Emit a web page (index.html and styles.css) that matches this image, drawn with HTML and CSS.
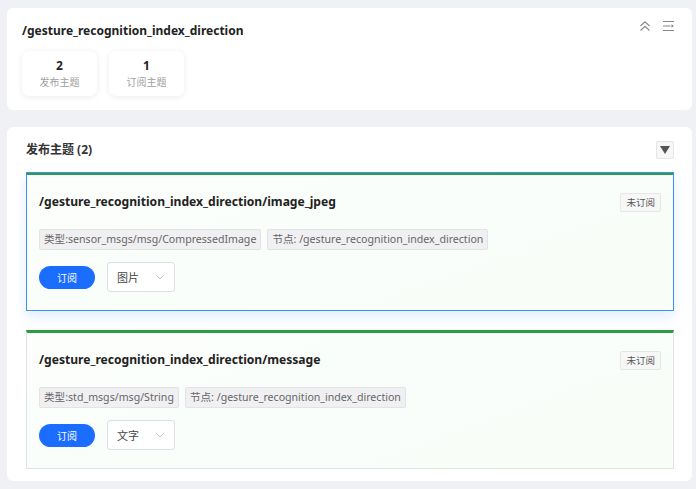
FILE: index.html
```html
<!DOCTYPE html>
<html lang="zh">
<head>
<meta charset="utf-8">
<link rel="stylesheet" href="styles.css">
</head>
<body>
<div class="page">
  <section class="card top">
    <div class="top-head">
      <h1 class="node-title">/gesture_recognition_index_direction</h1>
      <div class="tools">
        <svg class="ico" width="12" height="12" viewBox="0 0 12 12"><path d="M1.5 6 L6 1.8 L10.5 6 M1.5 10.5 L6 6.3 L10.5 10.5" fill="none" stroke="#888" stroke-width="1.1"/></svg>
        <svg class="ico" width="13" height="12" viewBox="0 0 13 12"><path d="M1 1.5 H12 M1 6 H8.5 M1 10.5 H12" stroke="#888" stroke-width="1.1" fill="none"/><path d="M9.5 4.3 L12 6 L9.5 7.7 Z" fill="#888"/></svg>
      </div>
    </div>
    <div class="stats">
      <div class="stat"><div class="num">2</div><div class="lbl">发布主题</div></div>
      <div class="stat"><div class="num">1</div><div class="lbl">订阅主题</div></div>
    </div>
  </section>

  <section class="card list">
    <div class="list-head">
      <h2 class="list-title">发布主题 (2)</h2>
      <button class="toggle"><span class="tri"></span></button>
    </div>
    <div class="topics">
      <div class="topic active">
        <div class="topic-head">
          <div class="topic-name">/gesture_recognition_index_direction/image_jpeg</div>
          <span class="badge">未订阅</span>
        </div>
        <div class="tags">
          <span class="tag">类型:sensor_msgs/msg/CompressedImage</span>
          <span class="tag">节点: /gesture_recognition_index_direction</span>
        </div>
        <div class="actions">
          <button class="sub">订阅</button>
          <div class="select"><span>图片</span><svg width="10" height="6" viewBox="0 0 10 6"><path d="M1 1 L5 5 L9 1" fill="none" stroke="#c0c4cc" stroke-width="1"/></svg></div>
        </div>
      </div>
      <div class="topic">
        <div class="topic-head">
          <div class="topic-name">/gesture_recognition_index_direction/message</div>
          <span class="badge">未订阅</span>
        </div>
        <div class="tags">
          <span class="tag">类型:std_msgs/msg/String</span>
          <span class="tag">节点: /gesture_recognition_index_direction</span>
        </div>
        <div class="actions">
          <button class="sub">订阅</button>
          <div class="select"><span>文字</span><svg width="10" height="6" viewBox="0 0 10 6"><path d="M1 1 L5 5 L9 1" fill="none" stroke="#c0c4cc" stroke-width="1"/></svg></div>
        </div>
      </div>
    </div>
  </section>
</div>
</body>
</html>
```

FILE: styles.css
```css
* { box-sizing: border-box; }
html, body { margin: 0; padding: 0; }
body {
  background: #f0f1f5;
  font-family: "Noto Sans", "Noto Sans CJK SC", sans-serif;
  color: #303133;
}
.page {
  padding: 8px 4px 8px 7px;
  display: flex;
  flex-direction: column;
  gap: 17px;
}
.card {
  background: #fff;
  border-radius: 6px;
}
.top { padding: 14px 15px 14px 15px; height: 102px; }
.top-head {
  display: flex;
  justify-content: space-between;
  align-items: flex-start;
  height: 18px;
}
.node-title {
  margin: 0;
  font-size: 12px;
  font-weight: 700;
  line-height: 18px;
  color: #222;
}
.tools {
  display: flex;
  gap: 11px;
  margin-top: -2px;
  padding-right: 2px;
}
.ico { display: block; }
.stats {
  display: flex;
  gap: 12px;
  margin-top: 11px;
}
.stat {
  width: 75px;
  height: 45px;
  border-radius: 7px;
  box-shadow: 0 1px 6px rgba(0,0,0,0.08);
  background: #fff;
  display: flex;
  flex-direction: column;
  align-items: center;
  justify-content: center;
}
.num { font-size: 12px; font-weight: 700; line-height: 16px; color: #222; }
.lbl { font-size: 10px; line-height: 14px; color: #a0a0a0; margin-top: 1px; }

.list { padding: 13px 18px 12px 19px; }
.list-head {
  display: flex;
  justify-content: space-between;
  align-items: center;
  height: 19px;
}
.list-title {
  margin: 0;
  font-size: 12px;
  font-weight: 700;
  color: #333;
  line-height: 18px;
}
.toggle {
  width: 18px;
  height: 18px;
  padding: 0;
  border: 1px solid #e6e6e6;
  background: #f7f7f7;
  border-radius: 2px;
  display: flex;
  align-items: center;
  justify-content: center;
}
.tri {
  width: 0; height: 0;
  border-left: 5px solid transparent;
  border-right: 5px solid transparent;
  border-top: 8px solid #555;
}
.topics {
  display: flex;
  flex-direction: column;
  gap: 19px;
  margin-top: 13px;
}
.topic {
  height: 139px;
  border: 1px solid #e2e2e2;
  border-top: 3px solid #2e9c45;
  background: linear-gradient(160deg, #fbfefb 0%, #f8fdf8 100%);
  padding: 16px 12px 18px 12px;
}
.topic.active {
  border-color: #3d90f5;
  border-top: 1px solid #3d90f5;
  box-shadow: inset 0 2px 0 #2e9c45, 0 6px 12px rgba(64,150,255,0.16);
  padding-top: 18px;
}
.topic-head {
  display: flex;
  justify-content: space-between;
  align-items: center;
  height: 20px;
}
.topic-name {
  font-size: 12.1px;
  font-weight: 700;
  color: #222;
}
.badge {
  font-size: 9.5px;
  line-height: 17px;
  padding: 0 5px;
  border: 1px solid #e6e6e6;
  background: #f7f7f7;
  border-radius: 2px;
  color: #555;
  margin-top: 3px;
}
.tags {
  display: flex;
  gap: 6px;
  margin-top: 18px;
}
.tag {
  font-size: 10.6px;
  line-height: 19px;
  padding: 0 4px;
  border: 1px solid #e3e3e6;
  background: #f0f0f2;
  border-radius: 2px;
  color: #666;
}
.actions {
  display: flex;
  align-items: center;
  gap: 12px;
  margin-top: 12px;
}
.sub {
  width: 56px;
  height: 23px;
  border: none;
  border-radius: 12px;
  background: #1a6dff;
  color: #fff;
  font-family: "Noto Sans CJK SC", sans-serif;
  font-size: 10px;
  padding: 0;
}
.select {
  width: 68px;
  height: 30px;
  border: 1px solid #dcdfe6;
  border-radius: 3px;
  background: #fff;
  display: flex;
  align-items: center;
  justify-content: space-between;
  padding: 0 9px 0 9px;
  font-size: 11px;
  color: #444;
}
```
